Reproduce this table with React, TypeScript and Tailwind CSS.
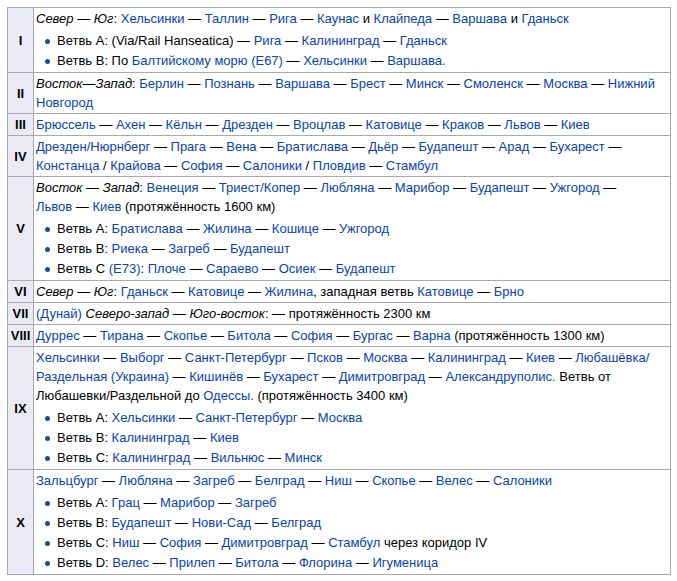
import { Fragment, type ReactNode } from 'react';

// link, text, italic helpers for the route strings
const A = ({ children }: { children: ReactNode }) => (
  <a className="text-[#0645ad] no-underline">{children}</a>
);
const I = ({ children }: { children: ReactNode }) => <i>{children}</i>;
const D = () => <> — </>;

// join city names with dashes, all linked
const chain = (items: string[]) =>
  items.map((c, i) => (
    <Fragment key={i}>
      {i > 0 && <D />}
      <A>{c}</A>
    </Fragment>
  ));

const Branches = ({ items }: { items: ReactNode[] }) => (
  <ul className="mt-[3px] ml-[21px]">
    {items.map((item, i) => (
      <li key={i} className="relative mb-[1px]">
        <span className="absolute left-[-12px] top-[8px] h-[5px] w-[5px] rounded-full bg-[#1d4f8c]" />
        {item}
      </li>
    ))}
  </ul>
);

const rows: { num: string; body: ReactNode }[] = [
  {
    num: 'I',
    body: (
      <>
        <I>Север</I> — <I>Юг</I>: {chain(['Хельсинки', 'Таллин', 'Рига', 'Каунас'])} и <A>Клайпеда</A> — <A>Варшава</A> и <A>Гданьск</A>
        <Branches
          items={[
            <>Ветвь A: (Via/Rail Hanseatica) — {chain(['Рига', 'Калининград', 'Гданьск'])}</>,
            <>Ветвь B: По <A>Балтийскому морю (E67)</A> — {chain(['Хельсинки', 'Варшава.'])}</>,
          ]}
        />
      </>
    ),
  },
  {
    num: 'II',
    body: (
      <>
        <I>Восток—Запад</I>: {chain(['Берлин', 'Познань', 'Варшава', 'Брест', 'Минск', 'Смоленск', 'Москва'])} — <A>Нижний<br />Новгород</A>
      </>
    ),
  },
  {
    num: 'III',
    body: <>{chain(['Брюссель', 'Ахен', 'Кёльн', 'Дрезден', 'Вроцлав', 'Катовице', 'Краков', 'Львов', 'Киев'])}</>,
  },
  {
    num: 'IV',
    body: (
      <>
        {chain(['Дрезден/Нюрнберг', 'Прага', 'Вена', 'Братислава', 'Дьёр', 'Будапешт', 'Арад', 'Бухарест'])} —<br />
        <A>Констанца</A> / <A>Крайова</A> — <A>София</A> — <A>Салоники</A> / <A>Пловдив</A> — <A>Стамбул</A>
      </>
    ),
  },
  {
    num: 'V',
    body: (
      <>
        <I>Восток</I> — <I>Запад</I>: {chain(['Венеция', 'Триест/Копер', 'Любляна', 'Марибор', 'Будапешт', 'Ужгород'])} —<br />
        {chain(['Львов', 'Киев'])} (протяжённость 1600 км)
        <Branches
          items={[
            <>Ветвь A: {chain(['Братислава', 'Жилина', 'Кошице', 'Ужгород'])}</>,
            <>Ветвь B: {chain(['Риека', 'Загреб', 'Будапешт'])}</>,
            <>Ветвь C <A>(E73)</A>: {chain(['Плоче', 'Сараево', 'Осиек', 'Будапешт'])}</>,
          ]}
        />
      </>
    ),
  },
  {
    num: 'VI',
    body: (
      <>
        <I>Север</I> — <I>Юг</I>: {chain(['Гданьск', 'Катовице', 'Жилина'])}, западная ветвь {chain(['Катовице', 'Брно'])}
      </>
    ),
  },
  {
    num: 'VII',
    body: (
      <>
        <A>(Дунай)</A> <I>Северо-запад</I> — <I>Юго-восток</I>: — протяжённость 2300 км
      </>
    ),
  },
  {
    num: 'VIII',
    body: (
      <>
        {chain(['Дуррес', 'Тирана', 'Скопье', 'Битола', 'София', 'Бургас', 'Варна'])} (протяжённость 1300 км)
      </>
    ),
  },
  {
    num: 'IX',
    body: (
      <>
        {chain(['Хельсинки', 'Выборг', 'Санкт-Петербург', 'Псков', 'Москва', 'Калининград', 'Киев', 'Любашёвка/'])}
        <br />
        <A>Раздельная</A> <A>(Украина)</A> — {chain(['Кишинёв', 'Бухарест', 'Димитровград', 'Александруполис.'])} Ветвь от
        <br />
        Любашевки/Раздельной до <A>Одессы.</A> (протяжённость 3400 км)
        <Branches
          items={[
            <>Ветвь A: {chain(['Хельсинки', 'Санкт-Петербург', 'Москва'])}</>,
            <>Ветвь B: {chain(['Калининград', 'Киев'])}</>,
            <>Ветвь C: {chain(['Калининград', 'Вильнюс', 'Минск'])}</>,
          ]}
        />
      </>
    ),
  },
  {
    num: 'X',
    body: (
      <>
        {chain(['Зальцбург', 'Любляна', 'Загреб', 'Белград', 'Ниш', 'Скопье', 'Велес', 'Салоники'])}
        <Branches
          items={[
            <>Ветвь A: {chain(['Грац', 'Марибор', 'Загреб'])}</>,
            <>Ветвь B: {chain(['Будапешт', 'Нови-Сад', 'Белград'])}</>,
            <>Ветвь C: {chain(['Ниш', 'София', 'Димитровград', 'Стамбул'])} через коридор IV</>,
            <>Ветвь D: {chain(['Велес', 'Прилеп', 'Битола', 'Флорина', 'Игуменица'])}</>,
          ]}
        />
      </>
    ),
  },
];

export default function App() {
  return (
    <div className="min-h-[581px] bg-white pl-[7px] pt-[7px] font-['Liberation_Sans',Arial,sans-serif] text-[13px] leading-[19px] text-black">
      <table className="w-[664px] border-collapse border border-[#aaaaaa]">
        <tbody>
          {rows.map((row) => (
            <tr key={row.num}>
              <th className="w-[26px] border border-[#aaaaaa] bg-[#eaeaf6] px-[1px] py-[1px] text-center align-middle font-bold">
                {row.num}
              </th>
              <td className="border border-[#aaaaaa] py-[1px] pl-[2px] pr-[3px] text-left align-top">{row.body}</td>
            </tr>
          ))}
        </tbody>
      </table>
    </div>
  );
}
